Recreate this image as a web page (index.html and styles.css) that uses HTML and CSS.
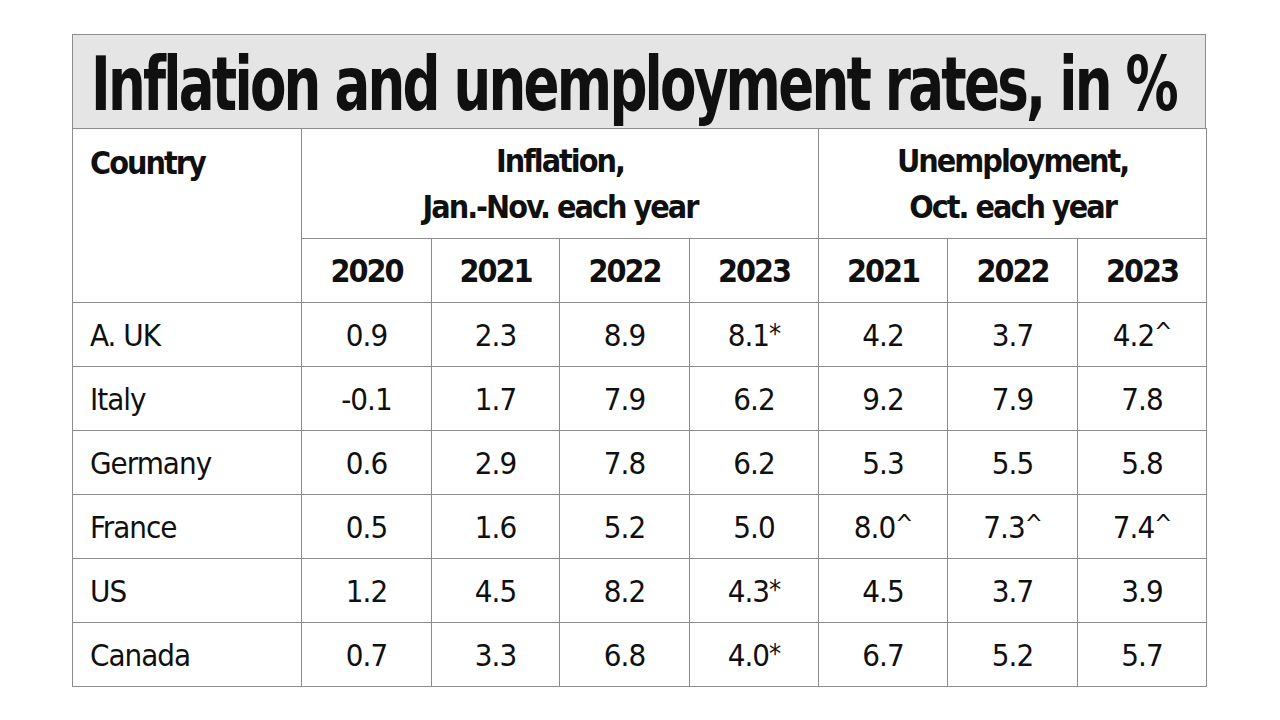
FILE: index.html
```html
<!DOCTYPE html>
<html lang="en">
<head>
<meta charset="utf-8">
<title>Inflation and unemployment rates</title>
<link rel="stylesheet" href="styles.css">
</head>
<body>
<div class="page">
  <div class="chart">
    <div class="title"><span class="title-text">Inflation and unemployment rates, in %</span></div>
    <table class="data">
      <colgroup>
        <col class="c-country">
        <col class="c130"><col class="c128"><col class="c130"><col class="c129">
        <col class="c129"><col class="c130"><col class="c129">
      </colgroup>
      <thead>
        <tr class="group-row">
          <th class="country-head" rowspan="2">Country</th>
          <th class="group" colspan="4">Inflation,<br>Jan.-Nov. each year</th>
          <th class="group" colspan="3">Unemployment,<br>Oct. each year</th>
        </tr>
        <tr class="year-row">
          <th>2020</th><th>2021</th><th>2022</th><th>2023</th>
          <th>2021</th><th>2022</th><th>2023</th>
        </tr>
      </thead>
      <tbody>
        <tr><td class="name">A. UK</td><td>0.9</td><td>2.3</td><td>8.9</td><td>8.1<span class="mark">*</span></td><td>4.2</td><td>3.7</td><td>4.2<span class="caret">^</span></td></tr>
        <tr><td class="name">Italy</td><td>-0.1</td><td>1.7</td><td>7.9</td><td>6.2</td><td>9.2</td><td>7.9</td><td>7.8</td></tr>
        <tr><td class="name">Germany</td><td>0.6</td><td>2.9</td><td>7.8</td><td>6.2</td><td>5.3</td><td>5.5</td><td>5.8</td></tr>
        <tr><td class="name">France</td><td>0.5</td><td>1.6</td><td>5.2</td><td>5.0</td><td>8.0<span class="caret">^</span></td><td>7.3<span class="caret">^</span></td><td>7.4<span class="caret">^</span></td></tr>
        <tr><td class="name">US</td><td>1.2</td><td>4.5</td><td>8.2</td><td>4.3<span class="mark">*</span></td><td>4.5</td><td>3.7</td><td>3.9</td></tr>
        <tr><td class="name">Canada</td><td>0.7</td><td>3.3</td><td>6.8</td><td>4.0<span class="mark">*</span></td><td>6.7</td><td>5.2</td><td>5.7</td></tr>
      </tbody>
    </table>
  </div>
</div>
</body>
</html>
```

FILE: styles.css
```css
html, body {
  margin: 0;
  padding: 0;
  background: #ffffff;
}

body {
  font-family: "DejaVu Sans Condensed", "DejaVu Sans", "Liberation Sans", sans-serif;
  color: #101010;
}

.page {
  padding: 34px 0 0 72px;
}

.chart {
  width: 1134px;
}

.title {
  box-sizing: border-box;
  height: 94px;
  background: #e5e5e5;
  border: 1px solid #8c8c8c;
  border-bottom: none;
  padding: 0 0 0 18px;
  display: flex;
  align-items: center;
}

.title-text {
  display: inline-block;
  font-size: 59px;
  font-weight: 700;
  line-height: 1;
  white-space: nowrap;
  letter-spacing: -2.75px;
  padding-top: 4px;
  transform: scaleY(1.28);
  transform-origin: left center;
}

.data {
  width: 1134px;
  border-collapse: collapse;
  table-layout: fixed;
}

.c-country { width: 229px; }
.c130 { width: 130px; }
.c129 { width: 129px; }
.c128 { width: 128px; }

.data th,
.data td {
  border: 1px solid #8c8c8c;
  padding: 0;
  text-align: center;
  vertical-align: middle;
}

.data th {
  font-weight: 700;
  font-size: 32px;
  letter-spacing: -2px;
}

.group-row {
  height: 110px;
}

.data th.group {
  line-height: 46px;
  padding-top: 1px;
}

.data th.country-head {
  text-align: left;
  vertical-align: top;
  padding: 15px 0 0 17px;
}

.year-row {
  height: 64px;
}

.data tbody tr {
  height: 64px;
}

.data td {
  font-size: 31px;
  font-weight: 400;
  letter-spacing: -1px;
}

.data td.name {
  text-align: left;
  padding-left: 17px;
}

.mark {
  font-size: 27px;
  vertical-align: 3px;
}

.caret {
  font-size: 24px;
  vertical-align: 6px;
}
```
